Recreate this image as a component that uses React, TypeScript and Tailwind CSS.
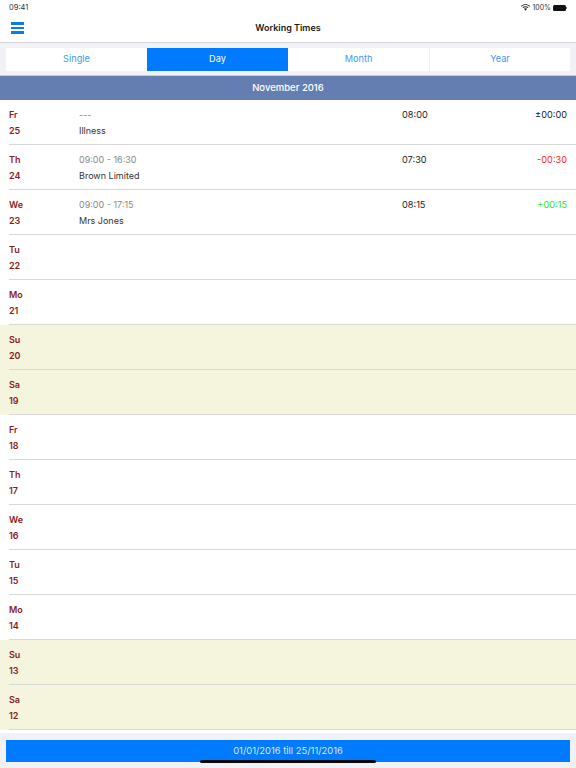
const rows: { d: string; n: string; time?: string; place?: string; work?: string; diff?: string; c?: string; weekend?: boolean }[] = [
  { d: "Fr", n: "25", time: "---", place: "Illness", work: "08:00", diff: "±00:00", c: "text-[#222222]" },
  { d: "Th", n: "24", time: "09:00 - 16:30", place: "Brown Limited", work: "07:30", diff: "-00:30", c: "text-[#ff2020]" },
  { d: "We", n: "23", time: "09:00 - 17:15", place: "Mrs Jones", work: "08:15", diff: "+00:15", c: "text-[#22e622]" },
  { d: "Tu", n: "22" },
  { d: "Mo", n: "21" },
  { d: "Su", n: "20", weekend: true },
  { d: "Sa", n: "19", weekend: true },
  { d: "Fr", n: "18" },
  { d: "Th", n: "17" },
  { d: "We", n: "16" },
  { d: "Tu", n: "15" },
  { d: "Mo", n: "14" },
  { d: "Su", n: "13", weekend: true },
  { d: "Sa", n: "12", weekend: true },
];

const tabs = ["Single", "Day", "Month", "Year"];

export default function App() {
  return (
    <div className="w-[576px] h-[768px] overflow-hidden relative bg-white font-['Inter','Liberation_Sans',sans-serif] text-[#222222]">
      {/* Status bar */}
      <div className="h-[14px] flex items-center justify-between pl-[9px] pr-[9px] pt-[1px]">
        <span className="text-[7.5px] leading-none text-[#333333]">09:41</span>
        <div className="flex items-center gap-[2px]">
          <svg width="9" height="7" viewBox="0 0 18 14" fill="#222222">
            <path d="M9 2.2c3 0 5.8 1.1 7.9 3.1l1.1-1.3C15.600 1.600 12.400.3 9 .3S2.400 1.600 0 4l1.100 1.300C3.200 3.300 6 2.200 9 2.200z" />
            <path d="M9 6.300c1.900 0 3.600.7 4.900 1.900l1.200-1.400C13.400 5.300 11.300 4.400 9 4.400s-4.400.9-6.100 2.400l1.200 1.400C5.400 7 7.100 6.300 9 6.300z" />
            <path d="M9 8.400c-1.200 0-2.300.4-3.100 1.200L9 13.500l3.100-3.900C11.300 8.800 10.200 8.400 9 8.400z" />
          </svg>
          <span className="text-[7px] leading-none text-[#333333]">100%</span>
          <div className="flex items-center gap-[0.5px]">
            <div className="w-[12.500px] h-[6px] rounded-[1.5px] bg-[#111111]" />
            <div className="w-[1px] h-[2px] bg-[#777777]" />
          </div>
        </div>
      </div>

      {/* Nav bar */}
      <div className="h-[28px] relative flex items-center justify-center border-b border-[#d4d4d6] box-content">
        <div className="absolute left-[11px] top-[8px] flex flex-col gap-[2px]">
          <div className="w-[13px] h-[2.5px] bg-[#0d7ae6]" />
          <div className="w-[13px] h-[2.5px] bg-[#0d7ae6]" />
          <div className="w-[13px] h-[2.5px] bg-[#0d7ae6]" />
        </div>
        <span className="text-[9px] font-semibold text-[#1a1a1a]">Working Times</span>
      </div>

      {/* Segments */}
      <div className="h-[33px] bg-[#f1f1f6] px-[6px] pt-[4.500px] border-b border-[#c9ccd6]">
        <div className="grid grid-cols-4 h-[23px] bg-white">
          {tabs.map((t, i) => (
            <div
              key={t}
              className={
                t === "Day"
                  ? "flex items-center justify-center bg-[#007aff] text-white text-[9.2px]"
                  : i === 3
                    ? "flex items-center justify-center border-l border-[#eeeeee] text-[#3f97f0] text-[9.2px]"
                    : "flex items-center justify-center text-[#3f97f0] text-[9.2px]"
              }
            >
              {t}
            </div>
          ))}
        </div>
      </div>

      {/* Section header */}
      <div className="h-[24px] bg-[#647eb2] flex items-center justify-center text-white text-[9.5px] font-medium">
        November 2016
      </div>

      {/* Rows */}
      <div>
        {rows.map((r) => (
          <div key={r.n} className={r.weekend ? "bg-[#f5f4dc]" : "bg-white"}>
            <div className="h-[45px] ml-[9px] border-b border-[#d8d8d8] box-border pt-[2px]">
              <div className="flex h-[17.500px] items-end">
                <span className="w-[70px] text-[9px] leading-[11px] font-semibold text-[#8b1a1a]">{r.d}</span>
                <span className="w-[260px] text-[9px] leading-[11px] text-[#8a8a8a]">{r.time}</span>
                <span className="w-[109px] text-[9.2px] leading-[11px] text-[#222222] pl-[63px]">{r.work}</span>
                <span className={"flex-1 text-right pr-[9px] text-[9.2px] leading-[11px] " + (r.c ?? "")}>{r.diff}</span>
              </div>
              <div className="flex mt-[5px]">
                <span className="w-[70px] text-[9px] leading-[11px] font-semibold text-[#8b1a1a]">{r.n}</span>
                <span className="text-[9px] leading-[11px] text-[#333333]">{r.place}</span>
              </div>
            </div>
          </div>
        ))}
      </div>

      {/* Bottom */}
      <div className="absolute left-0 right-0 bottom-0 h-[35px] bg-[#f1f1f6] px-[6px] pt-[6.500px]">
        <div className="h-[22.500px] bg-[#007aff] flex items-center justify-center text-[#dcebff] text-[9.4px]">
          01/01/2016 till 25/11/2016
        </div>
      </div>
      <div className="absolute left-[200px] top-[760px] w-[176px] h-[3px] rounded-full bg-[#0a0a0a]" />
    </div>
  );
}
